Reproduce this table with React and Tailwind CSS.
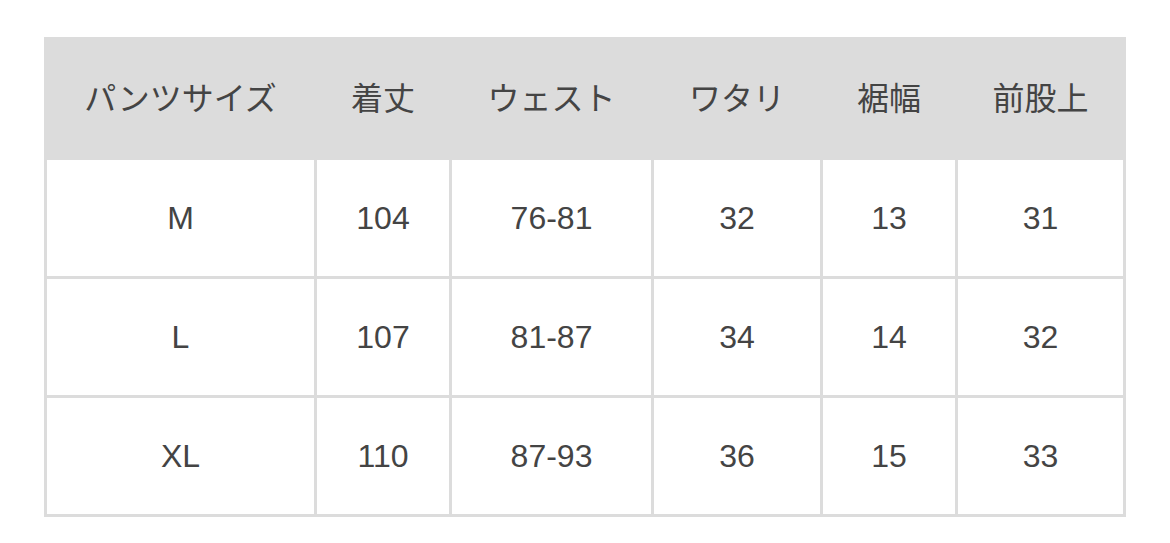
import React from "react";

const headers = ["パンツサイズ", "着丈", "ウェスト", "ワタリ", "裾幅", "前股上"];

const rows = [
    ["M", "104", "76-81", "32", "13", "31"],
    ["L", "107", "81-87", "34", "14", "32"],
    ["XL", "110", "87-93", "36", "15", "33"],
];

const widths = ["w-[270px]", "w-[135px]", "w-[202px]", "w-[169px]", "w-[135px]", "w-[168px]"];

const SizeTable = () => {
    return (
        <div className="min-h-[543px] w-[1170px] bg-white pt-[37px] pl-[44px]">
            <table
                className="table-fixed border-collapse w-[1082px] text-[32px] text-[#444]"
                style={{ fontFamily: '"Liberation Sans", "Noto Sans CJK JP", sans-serif' }}
            >
                <colgroup>
                    {widths.map((w, i) => (
                        <col key={i} className={w} />
                    ))}
                </colgroup>
                <thead>
                    <tr className="bg-[#dcdcdc] h-[120px]">
                        {headers.map((h) => (
                            <th key={h} className="border-[3px] border-[#dcdcdc] font-normal text-center">
                                {h}
                            </th>
                        ))}
                    </tr>
                </thead>
                <tbody>
                    {rows.map((r) => (
                        <tr key={r[0]} className="h-[119px]">
                            {r.map((c, i) => (
                                <td key={i} className="border-[3px] border-[#dcdcdc] text-center">
                                    {c}
                                </td>
                            ))}
                        </tr>
                    ))}
                </tbody>
            </table>
        </div>
    );
};

export default SizeTable;
